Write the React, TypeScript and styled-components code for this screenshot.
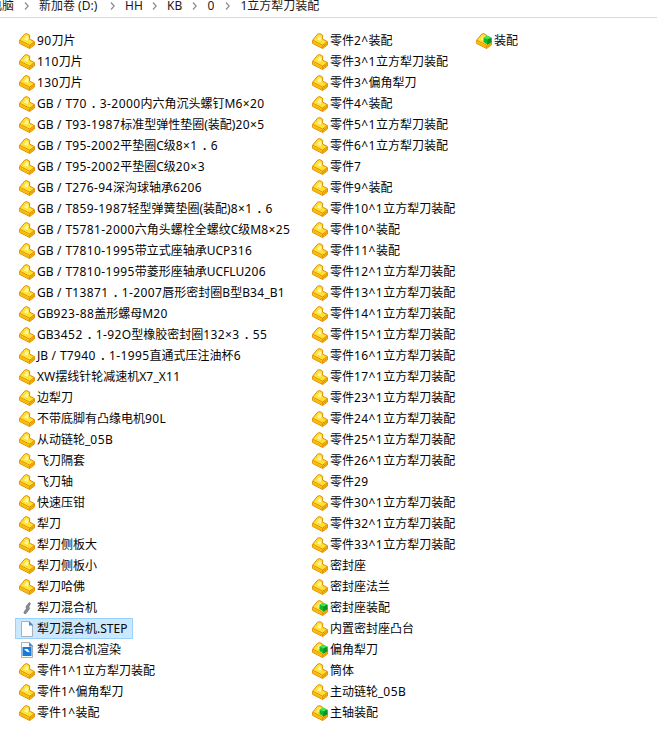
import React from "react";
import styled, { createGlobalStyle } from "styled-components";

const Global = createGlobalStyle`
  html, body { margin: 0; padding: 0; background: #fff; }
  body { font-family: "Noto Sans", "Noto Sans CJK SC", sans-serif; font-size: 12px; color: #000; overflow: hidden; }
`;
const Page = styled.div`width: 657px; height: 748px; overflow: hidden; background: #fff;`;
const Breadcrumb = styled.div`
  height: 17px; border-bottom: 1px solid #d9d9d9; display: flex; align-items: center;
  margin-bottom: 12px; color: #1a1a1a; white-space: nowrap; line-height: 12px;
`;
const Crumb = styled.span<{ $w: number }>`
  flex: none; width: ${p => p.$w}px; display: block;
`;
const CrumbRow = styled.div`display: flex; align-items: center; margin-left: -10px; margin-top: -5px;`;
const Chevron = styled.svg`flex: none; width: 5px; height: 8px; margin: 0 10.5px 0 0;`;
const Grid = styled.div`
  display: grid; grid-auto-flow: column; grid-template-rows: repeat(33, 21px);
  grid-template-columns: 293px 164px 1fr; padding-left: 15px;
`;
const Row = styled.div<{ $selected?: boolean }>`
  display: flex; align-items: center; height: 21px; box-sizing: border-box; padding-left: 4px; gap: 2px;
  white-space: nowrap; width: ${p => (p.$selected ? "118px" : "auto")};
  ${p => p.$selected && "background:#cce8ff;outline:1px solid #99d1ff;outline-offset:-1px;"}
`;
const Label = styled.span`color: #050505; line-height: 21px;`;
const Wide = styled.span`letter-spacing: 0.42px;`;
const Dot = styled.span`padding-left: 4px; letter-spacing: -3px;`;
const IconBox = styled.svg`flex: none; width: 16px; height: 16px;`;

const Part = ({ green }: { green?: boolean }) => (
  <IconBox viewBox="0 0 16 16">
    <path d="M0.6 7.2 L5.6 1.2 L7.8 0.6 L10.8 2.4 L10.4 6 L15.4 8.6 L15.4 12 L10.6 15.5 L0.6 10.4Z" fill="#ffe033" stroke="#df8c00" strokeWidth="1" strokeLinejoin="round" />
    <path d="M1 7.4 L10.6 12.2 L10.6 15.3" fill="none" stroke="#df8c00" strokeWidth="1" />
    <path d="M10.6 12.2 L15.2 8.8" fill="none" stroke="#df8c00" strokeWidth="1" />
    <path d="M5 6.4 L7.4 2.8 L9.8 4.4 L8.6 7.8Z" fill="#fff6a0" />
    <path d="M1.4 8.6 L10 12.9 L10 14.5 L1.4 10.1Z" fill="#f7b500" />
    <path d="M11.2 12.6 L14.8 9.8 L14.8 11.6 L11.2 14.5Z" fill="#e89b00" />
    {green && <>
      <path d="M7.5 4.8 L11.5 2.8 L15.5 4.8 L15.5 9 L11.5 11.4 L7.5 9Z" fill="#10b82f" />
      <path d="M7.5 4.8 L11.5 2.8 L15.5 4.8 L11.5 6.6Z" fill="#3fe850" />
      <path d="M11.5 6.6 L15.5 4.8 L15.5 9 L11.5 11.4Z" fill="#0a9127" />
    </>}
  </IconBox>
);
const Exe = () => (
  <IconBox viewBox="0 0 16 16">
    <path d="M6 14 L4.8 12.5 L7.4 8.6 L7 6.8 L10.2 2.4 L11.4 3.4 L9.8 6.8 L10.6 8.4 L7.8 12.6Z" fill="#8a8f96" stroke="#555b63" strokeWidth=".6" />
  </IconBox>
);
const Doc = () => (
  <IconBox viewBox="0 0 16 16">
    <path d="M2.5 .5 H10 L13.5 4 V15.5 H2.5Z" fill="#fdfdfd" stroke="#a9b0b8" />
    <path d="M10 0 L14.4 4.4 L10 4.4Z" fill="#3a8fd8" />
  </IconBox>
);
const Render = () => (
  <IconBox viewBox="0 0 16 16">
    <path d="M2.5 .5 H10 L13.5 4 V15.5 H2.5Z" fill="#fdfdfd" stroke="#a9b0b8" />
    <path d="M10 0 L14.4 4.4 L10 4.4Z" fill="#3a8fd8" />
    <rect x="3.5" y="5" width="9" height="9" fill="#1a78d6" />
    <path d="M5 7 L8.5 7 L11 10.5 L7.5 9.5Z" fill="#fff" />
  </IconBox>
);

type Kind = "p" | "a" | "x" | "d" | "r";
const col1: [string, Kind?][] = [
  ["90刀片"],["110刀片"],["130刀片"],["GB / T70．3-2000内六角沉头螺钉M6×20"],["GB / T93-1987标准型弹性垫圈(装配)20×5"],
  ["GB / T95-2002平垫圈C级8×1．6"],["GB / T95-2002平垫圈C级20×3"],["GB / T276-94深沟球轴承6206"],["GB / T859-1987轻型弹簧垫圈(装配)8×1．6"],
  ["GB / T5781-2000六角头螺栓全螺纹C级M8×25"],["GB / T7810-1995带立式座轴承UCP316"],["GB / T7810-1995带菱形座轴承UCFLU206"],
  ["GB / T13871．1-2007唇形密封圈B型B34_B1"],["GB923-88盖形螺母M20"],["GB3452．1-92O型橡胶密封圈132×3．55"],["JB / T7940．1-1995直通式压注油杯6"],
  ["XW摆线针轮减速机X7_X11"],["边犁刀"],["不带底脚有凸缘电机90L"],["从动链轮_05B"],["飞刀隔套"],["飞刀轴"],["快速压钳"],["犁刀"],["犁刀侧板大"],["犁刀侧板小"],["犁刀哈佛"],
  ["犁刀混合机","x"],["犁刀混合机.STEP","d"],["犁刀混合机渲染","r"],["零件1^1立方犁刀装配"],["零件1^偏角犁刀"],["零件1^装配"],
];
const col2: [string, Kind?][] = [
  ["零件2^装配"],["零件3^1立方犁刀装配"],["零件3^偏角犁刀"],["零件4^装配"],["零件5^1立方犁刀装配"],["零件6^1立方犁刀装配"],["零件7"],["零件9^装配"],
  ["零件10^1立方犁刀装配"],["零件10^装配"],["零件11^装配"],["零件12^1立方犁刀装配"],["零件13^1立方犁刀装配"],["零件14^1立方犁刀装配"],["零件15^1立方犁刀装配"],
  ["零件16^1立方犁刀装配"],["零件17^1立方犁刀装配"],["零件23^1立方犁刀装配"],["零件24^1立方犁刀装配"],["零件25^1立方犁刀装配"],["零件26^1立方犁刀装配"],["零件29"],
  ["零件30^1立方犁刀装配"],["零件32^1立方犁刀装配"],["零件33^1立方犁刀装配"],["密封座"],["密封座法兰"],["密封座装配","a"],["内置密封座凸台"],["偏角犁刀","a"],["筒体"],["主动链轮_05B"],["主轴装配","a"],
];
const col3: [string, Kind?][] = [["装配","a"]];

const icon = (k?: Kind) => k === "a" ? <Part green /> : k === "x" ? <Exe /> : k === "d" ? <Doc /> : k === "r" ? <Render /> : <Part />;
const Chev = () => <Chevron viewBox="0 0 5 8"><path d="M1 .5 L4.2 4 L1 7.5" fill="none" stroke="#8c8c8c" strokeWidth="1.2" /></Chevron>;

const Text = ({ value }: { value: string }) => (
  <Label>
    {value.split(/([0-9 \/^×-]+|．)/).map((part, i) =>
      part === "．" ? <Dot key={i}>{part}</Dot> : i % 2 ? <Wide key={i}>{part}</Wide> : part
    )}
  </Label>
);

export default function App() {
  const crumbs: [string, number][] = [["电脑", 33.5], ["新加卷 (D:)", 70.5], ["HH", 26.5], ["KB", 25], ["0", 17.5], ["1立方犁刀装配", 100]];
  return (
    <Page>
      <Global />
      <Breadcrumb>
        <CrumbRow>
          {crumbs.map(([t, w], i) => (
            <React.Fragment key={t}>
              <Crumb $w={w}>{t}</Crumb>
              {i < crumbs.length - 1 && <Chev />}
            </React.Fragment>
          ))}
        </CrumbRow>
      </Breadcrumb>
      <Grid>
        {[...col1, ...col2].map(([t, k], i) => (
          <Row key={i} $selected={k === "d"}>{icon(k)}<Text value={t} /></Row>
        ))}
        {col3.map(([t, k]) => <Row key={t}>{icon(k)}<Text value={t} /></Row>)}
      </Grid>
    </Page>
  );
}
